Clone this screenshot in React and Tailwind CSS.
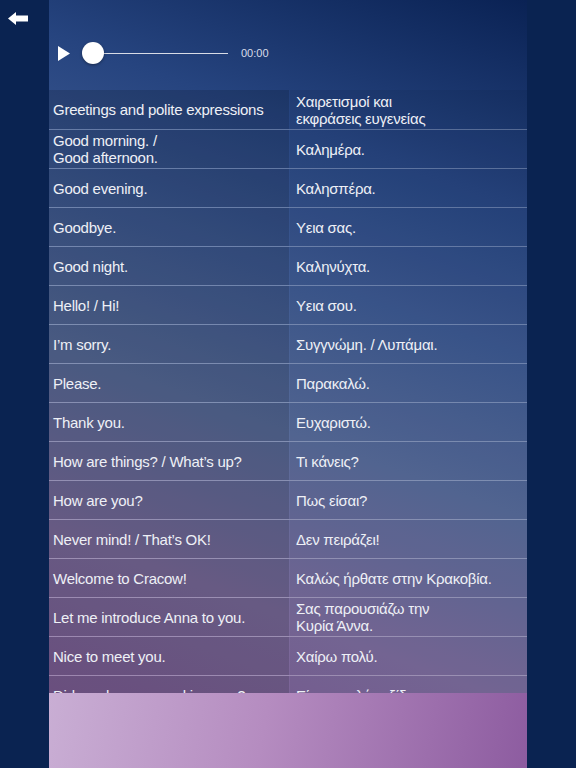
import React from "react";

const rows = [
  ["Greetings and polite expressions", "Χαιρετισμοί και\nεκφράσεις ευγενείας"],
  ["Good morning. /\nGood afternoon.", "Καλημέρα."],
  ["Good evening.", "Καλησπέρα."],
  ["Goodbye.", "Υεια σας."],
  ["Good night.", "Καληνύχτα."],
  ["Hello! / Hi!", "Υεια σου."],
  ["I’m sorry.", "Συγγνώμη. / Λυπάμαι."],
  ["Please.", "Παρακαλώ."],
  ["Thank you.", "Ευχαριστώ."],
  ["How are things? / What’s up?", "Τι κάνεις?"],
  ["How are you?", "Πως είσαι?"],
  ["Never mind! / That’s OK!", "Δεν πειράζει!"],
  ["Welcome to Cracow!", "Καλώς ήρθατε στην Κρακοβία."],
  ["Let me introduce Anna to you.", "Σας παρουσιάζω την\nΚυρία Άννα."],
  ["Nice to meet you.", "Χαίρω πολύ."],
  ["Did you have a good journey?", "Είχατε καλό ταξίδι;"],
];

const Cell = ({ text, className }) => (
  <div className={"flex items-center whitespace-pre-line leading-[17px] " + className}>
    {text}
  </div>
);

export default function App() {
  return (
    <div
      className="flex h-[768px] w-[576px] overflow-hidden bg-[#0a2351] text-[15px] tracking-[-0.25px] text-[#eef0f6]"
      style={{ fontFamily: '"Liberation Sans", "DejaVu Sans", sans-serif' }}
    >
      {/* sidebar */}
      <div className="w-[49px] shrink-0 pl-[8px] pt-[12px]">
        <svg width="21" height="13" viewBox="0 0 21 13">
          <path d="M0 6.5 L8 0 L8 3.5 L20 3.5 L20 9.5 L8 9.5 L8 13 Z" fill="#fff" />
        </svg>
      </div>

      {/* main */}
      <div className="flex w-[478px] shrink-0 flex-col bg-[linear-gradient(200deg,#0a2254_0%,#26447f_22%,#3c5890_38%,#566a98_55%,#7a6a9a_75%,#7e5692_100%)]">
        {/* player */}
        <div className="flex h-[90px] shrink-0 items-center pl-[9px] pt-[16px]">
          <svg width="12" height="15" viewBox="0 0 12 15">
            <path d="M0 0 L12 7.5 L0 15 Z" fill="#fff" />
          </svg>
          <div className="relative ml-[13px] flex h-[22px] w-[145px] items-center">
            <div className="ml-[11px] h-px w-[134px] bg-[#d8dce6]" />
            <div className="absolute -left-px top-0 h-[22px] w-[22px] rounded-full bg-white shadow-[0_1px_3px_rgba(0,0,0,0.4)]" />
          </div>
          <span className="ml-[13px] text-[11px] tracking-normal text-[#d8dce8]">00:00</span>
        </div>

        {/* table */}
        <div className="h-[603px] shrink-0 overflow-hidden">
          {rows.map(([en, el], i) => (
            <div
              key={i}
              className={"flex h-[39px] " + (i > 0 ? "border-t border-white/25" : "")}
            >
              <Cell text={en} className="w-[240px] bg-black/15 pl-[4px]" />
              <Cell text={el} className="ml-px flex-1 bg-black/5 pl-[6px]" />
            </div>
          ))}
        </div>

        {/* footer */}
        <div className="flex-1 bg-[linear-gradient(100deg,#c9aed4_0%,#b58cc0_45%,#8d5ca0_100%)]" />
      </div>

      <div className="flex-1" />
    </div>
  );
}
